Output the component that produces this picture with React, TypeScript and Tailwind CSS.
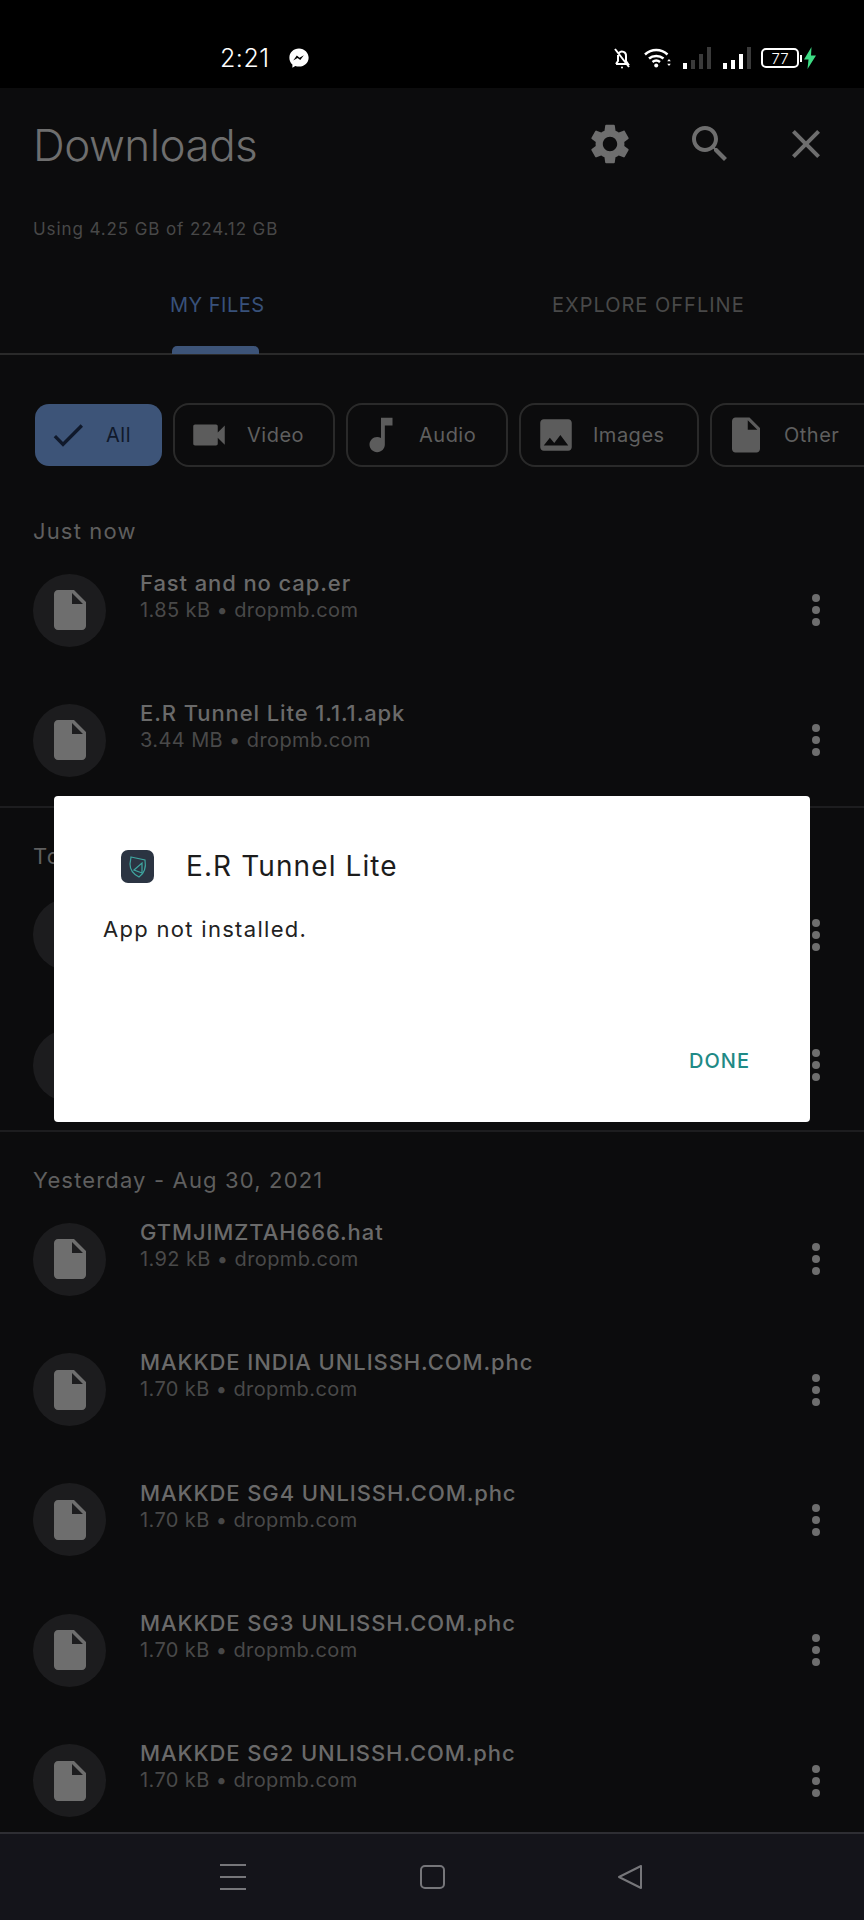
const FONT = "font-['Inter','Liberation_Sans',sans-serif]";

const ICONS = {
  settings:
    'M19.14 12.94c.04-.3.06-.61.06-.94 0-.32-.02-.64-.07-.94l2.03-1.58c.18-.14.23-.41.12-.61l-1.92-3.32c-.12-.22-.37-.29-.59-.22l-2.39.96c-.5-.38-1.03-.7-1.62-.94l-.36-2.54c-.04-.24-.24-.41-.48-.41h-3.84c-.24 0-.43.17-.47.41l-.36 2.54c-.59.24-1.13.57-1.62.94l-2.39-.96c-.22-.08-.47 0-.59.22L2.74 8.87c-.12.21-.08.47.12.61l2.03 1.58c-.05.3-.09.63-.09.94s.02.64.07.94l-2.03 1.58c-.18.14-.23.41-.12.61l1.92 3.32c.12.22.37.29.59.22l2.39-.96c.5.38 1.03.7 1.62.94l.36 2.54c.05.24.24.41.48.41h3.84c.24 0 .44-.17.47-.41l.36-2.54c.59-.24 1.13-.56 1.62-.94l2.39.96c.22.08.47 0 .59-.22l1.92-3.32c.12-.22.07-.47-.12-.61l-2.01-1.58zM12 15.6c-1.98 0-3.6-1.62-3.6-3.6s1.62-3.6 3.6-3.6 3.6 1.62 3.6 3.6-1.62 3.6-3.6 3.6z',
  search:
    'M15.5 14h-.79l-.28-.27C15.41 12.59 16 11.11 16 9.5 16 5.91 13.09 3 9.5 3S3 5.91 3 9.5 5.91 16 9.5 16c1.61 0 3.09-.59 4.23-1.57l.27.28v.79l5 4.99L20.49 19l-4.99-5zm-6 0C7.01 14 5 11.99 5 9.5S7.01 5 9.5 5 14 7.01 14 9.5 11.99 14 9.5 14z',
  close: 'M19 6.41L17.59 5 12 10.59 6.41 5 5 6.41 10.59 12 5 17.59 6.41 19 12 13.41 17.59 19 19 17.59 13.41 12z',
  file: 'M6 2c-1.1 0-1.99.9-1.99 2L4 20c0 1.1.89 2 1.99 2H18c1.1 0 2-.9 2-2V8l-6-6H6zm7 7V3.5L18.5 9H13z',
  video: 'M17 10.5V7c0-.55-.45-1-1-1H4c-.55 0-1 .45-1 1v10c0 .55.45 1 1 1h12c.55 0 1-.45 1-1v-3.5l4 4v-11l-4 4z',
  audio: 'M12 3v10.55c-.59-.34-1.27-.55-2-.55-2.21 0-4 1.79-4 4s1.79 4 4 4 4-1.79 4-4V7h4V3h-6z',
  image: 'M21 19V5c0-1.1-.9-2-2-2H5c-1.1 0-2 .9-2 2v14c0 1.1.9 2 2 2h14c1.1 0 2-.9 2-2zM8.5 13.5l2.5 3.01L14.5 12l4.5 6H5l3.5-4.5z',
  check: 'M9 16.17L4.83 12l-1.42 1.41L9 19 21 7l-1.41-1.41z',
};

function Icon({ name, className }: { name: keyof typeof ICONS; className: string }) {
  return (
    <svg viewBox="0 0 24 24" fill="currentColor" className={className}>
      <path d={ICONS[name]} />
    </svg>
  );
}

function StatusBar() {
  return (
    <div className="relative flex h-[88px] shrink-0 items-center bg-black pl-[220px] pr-[48px] pt-[28px] text-white">
      <span className="text-[25px] font-light leading-none tracking-[0.5px]">2:21</span>
      {/* messenger */}
      <svg viewBox="0 0 24 24" className="ml-[18px] h-[22px] w-[22px]">
        <path fill="#fff" d="M12 1.5C6 1.500 1.500 5.900 1.500 11.600c0 3 1.200 5.600 3.300 7.400v3.500l3.200-1.800c1.200.4 2.600.6 4 .6 6 0 10.500-4.400 10.500-9.700S18 1.500 12 1.500z" />
        <path fill="#000" d="M5.700 14.600l3.900-5.400 3 2.400 4.700-2.700-3.900 5.400-3-2.400z" />
      </svg>
      <div className="ml-auto flex items-center">
        {/* bell off */}
        <svg viewBox="0 0 18 24" className="h-[24px] w-[18px]" fill="none" stroke="#fff" strokeWidth="2">
          <path d="M3 18h12l-2-3V10a4 4 0 0 0-7-3M5 9v6l-2 3M2 3l14 18" />
          <circle cx="9" cy="21.500" r="1" fill="#fff" stroke="none" />
        </svg>
        {/* wifi */}
        <svg viewBox="0 0 28 20" className="ml-[13px] h-[20px] w-[28px]" fill="none" stroke="#fff" strokeWidth="2.500">
          <path d="M1 6.500c6.500-6 16-6 22.500 0M5 10.500c4-3.500 10.500-3.500 14.500 0M8.500 14c2.300-1.800 5.200-1.800 7.500 0" />
          <circle cx="12.200" cy="17.500" r="2" fill="#fff" stroke="none" />
          <path d="M25 11l-1.800 2.200h3.600zM25 18l-1.800-2.200h3.600z" fill="#fff" stroke="none" />
        </svg>
        {/* signal, weak */}
        <div className="ml-[11px] flex h-[22px] items-end gap-[4px]">
          <div className="h-[6px] w-[4px] bg-white" />
          <div className="h-[9px] w-[4px] bg-[#3a3a3a]" />
          <div className="h-[15px] w-[4px] bg-[#3a3a3a]" />
          <div className="h-[22px] w-[4px] bg-[#3a3a3a]" />
        </div>
        {/* signal, strong */}
        <div className="ml-[12px] flex h-[22px] items-end gap-[4px]">
          <div className="h-[6px] w-[4px] bg-white" />
          <div className="h-[9px] w-[4px] bg-white" />
          <div className="h-[15px] w-[4px] bg-white" />
          <div className="h-[22px] w-[4px] bg-[#3a3a3a]" />
        </div>
        <div className="relative ml-[10px] flex h-[20px] w-[38px] items-center justify-center rounded-[5px] border-2 border-white text-[15px] font-light leading-none">
          77
          <div className="absolute right-[-5px] top-[5px] h-[7px] w-[2px] bg-white" />
        </div>
        <svg viewBox="0 0 12 22" className="ml-[5px] h-[22px] w-[12px]">
          <path fill="#3ddc84" d="M7.500 0L0 12.500h4.500L3.500 22 12 8.500H7z" />
        </svg>
      </div>
    </div>
  );
}

function Header() {
  return (
    <div className="shrink-0">
      <div className="flex h-[116px] items-center pl-[33px]">
        <h1 className="pb-[2px] text-[44px] font-light leading-none tracking-[-0.5px] text-[#6e6e6e]">Downloads</h1>
        <div className="ml-auto mb-[4px] flex items-center">
          <Icon name="settings" className="h-[48px] w-[48px] text-[#6e6e6e]" />
          <Icon name="search" className="ml-[52px] h-[48px] w-[48px] text-[#6e6e6e]" />
          <Icon name="close" className="ml-[48px] mr-[34px] h-[48px] w-[48px] text-[#6e6e6e]" />
        </div>
      </div>
      <p className="mt-[13px] pl-[33px] text-[17px] leading-[24px] tracking-[0.9px] text-[#484848]">Using 4.25 GB of 224.12 GB</p>
    </div>
  );
}

function Tabs() {
  return (
    <div className="mt-[21px] flex h-[93px] shrink-0 border-b-2 border-[#2a2a2a] text-[20px] leading-none">
      <div className="relative w-[432px] pl-[170px] pt-[33px] tracking-[0.5px] text-[#38517a]">
        MY FILES
        <div className="absolute bottom-[-1px] left-[172px] h-[8px] w-[87px] rounded-t-[5px] bg-[#3d5478]" />
      </div>
      <div className="pl-[120px] pt-[33px] tracking-[1px] text-[#494949]">EXPLORE OFFLINE</div>
    </div>
  );
}

const CHIPS = [
  { label: 'Video', icon: 'video', width: 'w-[162px]', iconClass: 'h-[42px] w-[42px]', pad: 'pl-[13px]', gap: 'gap-[17px]' },
  { label: 'Audio', icon: 'audio', width: 'w-[162px]', iconClass: 'h-[46px] w-[46px]', pad: 'pl-[10px]', gap: 'gap-[15px]' },
  { label: 'Images', icon: 'image', width: 'w-[180px]', iconClass: 'h-[42px] w-[42px]', pad: 'pl-[14px]', gap: 'gap-[16px]' },
  { label: 'Other', icon: 'file', width: 'w-[170px]', iconClass: 'h-[42px] w-[42px]', pad: 'pl-[13px]', gap: 'gap-[17px]' },
] as const;

function Chips() {
  return (
    <div className="mt-[48px] flex h-[64px] shrink-0 items-center gap-[11px] pl-[35px] text-[20px] tracking-[0.5px]">
      <div className="flex h-[62px] w-[127px] shrink-0 items-center gap-[18px] rounded-[14px] bg-[#3d5478] pl-[13px] text-[#10192b]">
        <Icon name="check" className="h-[40px] w-[40px] shrink-0" />
        <span>All</span>
      </div>
      {CHIPS.map((chip) => (
        <div
          key={chip.label}
          className={`flex h-[64px] shrink-0 items-center rounded-[16px] border-2 border-[#2a2a2a] text-[#5f5f5f] ${chip.width} ${chip.pad} ${chip.gap}`}
        >
          <Icon name={chip.icon} className={`shrink-0 text-[#5c5c5c] ${chip.iconClass}`} />
          <span>{chip.label}</span>
        </div>
      ))}
    </div>
  );
}

function FileRow({ name, meta }: { name?: string; meta?: string }) {
  return (
    <div className="flex h-[130.300px] items-center pl-[33px]">
      <div className="flex h-[73px] w-[73px] shrink-0 items-center justify-center rounded-full bg-[#1c1c1e]">
        <Icon name="file" className="h-[48px] w-[48px] text-[#6e6e6e]" />
      </div>
      <div className="ml-[34px] self-start pt-[24px]">
        <div className="text-[22px] font-medium leading-[28px] tracking-[0.9px] text-[#6a6a6a]">{name}</div>
        <div className="text-[20px] leading-[26px] tracking-[0.4px] text-[#494949]">{meta}</div>
      </div>
      <div className="ml-auto mr-[44px] flex flex-col gap-[4px]">
        <div className="h-[8px] w-[8px] rounded-full bg-[#6e6e6e]" />
        <div className="h-[8px] w-[8px] rounded-full bg-[#6e6e6e]" />
        <div className="h-[8px] w-[8px] rounded-full bg-[#6e6e6e]" />
      </div>
    </div>
  );
}

function Section({ label, first, children }: { label: string; first?: boolean; children: React.ReactNode }) {
  return (
    <section className={first ? 'pt-[50px]' : 'border-t-2 border-[#1d1d1f] pt-[34px]'}>
      <div className="h-[28px] pl-[33px] text-[22px] leading-[28px] tracking-[1.15px] text-[#5f5f5f]">{label}</div>
      {children}
    </section>
  );
}

function BottomNav() {
  return (
    <div className="flex h-[88px] shrink-0 items-center border-t-2 border-[#2e2e33] bg-[#14141a] text-[#76767a]">
      <div className="ml-[220px] flex w-[26px] flex-col gap-[10px]">
        <div className="h-[2px] bg-current" />
        <div className="h-[2px] bg-current" />
        <div className="h-[2px] bg-current" />
      </div>
      <div className="ml-[174px] h-[24px] w-[25px] rounded-[5px] border-2 border-current" />
      <svg viewBox="0 0 24 24" className="ml-[173px] h-[24px] w-[24px]" fill="none" stroke="currentColor" strokeWidth="2" strokeLinejoin="round">
        <path d="M23 1v22L1 12z" />
      </svg>
    </div>
  );
}

function InstallDialog() {
  return (
    <div className="absolute left-[54px] top-[796px] h-[326px] w-[756px] rounded-[4px] bg-white">
      <div className="flex items-center pl-[67px] pt-[53px]">
        <svg viewBox="0 0 33 33" className="h-[33px] w-[33px]">
          <rect width="33" height="33" rx="7" fill="#2b3442" />
          <path d="M10 7l14 3c1 6 0 13-6 17-6-3-9-8-9-13z" fill="none" stroke="#3fa6a0" strokeWidth="1.200" />
          <path d="M13 20l8-7v10z" fill="none" stroke="#3fa6a0" strokeWidth="1.200" />
        </svg>
        <h2 className="ml-[32px] text-[28px] leading-[34px] tracking-[1.1px] text-[#1c1c1c]">E.R Tunnel Lite</h2>
      </div>
      <p className="pl-[49px] pt-[31px] text-[22px] leading-[30px] tracking-[1.3px] text-[#222]">App not installed.</p>
      <button className="absolute bottom-[49px] right-[60px] text-[20px] font-medium leading-[24px] tracking-[1px] text-[#1f8a86]">DONE</button>
    </div>
  );
}

export default function App() {
  return (
    <div className={`relative flex h-[1920px] w-[864px] flex-col overflow-hidden bg-[#0c0c0d] ${FONT}`}>
      <StatusBar />
      <Header />
      <Tabs />
      <Chips />
      <div className="min-h-0 flex-1 overflow-hidden">
        <Section label="Just now" first>
          <FileRow name="Fast and no cap.er" meta="1.85 kB • dropmb.com" />
          <FileRow name="E.R Tunnel Lite 1.1.1.apk" meta="3.44 MB • dropmb.com" />
        </Section>
        <Section label="Today">
          <FileRow />
          <FileRow />
        </Section>
        <Section label="Yesterday - Aug 30, 2021">
          <FileRow name="GTMJIMZTAH666.hat" meta="1.92 kB • dropmb.com" />
          <FileRow name="MAKKDE INDIA UNLISSH.COM.phc" meta="1.70 kB • dropmb.com" />
          <FileRow name="MAKKDE SG4 UNLISSH.COM.phc" meta="1.70 kB • dropmb.com" />
          <FileRow name="MAKKDE SG3 UNLISSH.COM.phc" meta="1.70 kB • dropmb.com" />
          <FileRow name="MAKKDE SG2 UNLISSH.COM.phc" meta="1.70 kB • dropmb.com" />
        </Section>
      </div>
      <BottomNav />
      <InstallDialog />
    </div>
  );
}
